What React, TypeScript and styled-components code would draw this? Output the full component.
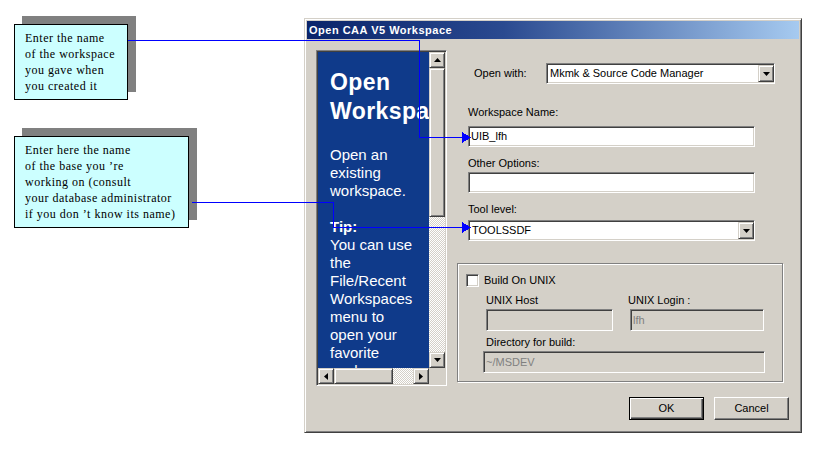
import React from "react";
import styled, { createGlobalStyle } from "styled-components";

const Global = createGlobalStyle`
  html, body { margin: 0; padding: 0; background: #ffffff; }
  body { font-family: "Liberation Sans", Arial, sans-serif; }
`;

const GRAY = "#d4d0c8";

const Page = styled.div`
  position: relative;
  width: 816px;
  height: 451px;
  overflow: hidden;
  display: flex;
  align-items: flex-start;
  padding-left: 14px;
  box-sizing: border-box;
`;

const Notes = styled.div`
  width: 290px;
  flex: none;
  display: flex;
  flex-direction: column;
  align-items: flex-start;
  gap: 36px;
  padding-top: 24px;
`;

const Callout = styled.div<{ $w: number }>`
  width: ${(p) => p.$w}px;
  box-sizing: border-box;
  border: 1px solid #000;
  background: #ccffff;
  box-shadow: 8px -8px 0 #808080;
  padding: 5px 0 5px 10px;
  font: 12px/16px "Liberation Serif", "Times New Roman", serif;
  letter-spacing: 0.5px;
  color: #000;
  white-space: nowrap;
`;

const Window = styled.div`
  margin-top: 18px;
  width: 498px;
  height: 415px;
  flex: none;
  box-sizing: border-box;
  background: ${GRAY};
  border: 1px solid;
  border-color: ${GRAY} #404040 #404040 ${GRAY};
  box-shadow: inset 1px 1px 0 #fff, inset -1px -1px 0 #808080;
  padding: 2px;
  display: flex;
  flex-direction: column;
`;

const TitleBar = styled.div`
  height: 18px;
  line-height: 18px;
  background: linear-gradient(90deg, #0a246a 0%, #2a4a90 40%, #a6caf0 100%);
  color: #fff;
  font: bold 11px/18px "Liberation Sans", Arial, sans-serif;
  letter-spacing: 0.5px;
  padding-left: 2px;
  white-space: nowrap;
`;

const Body = styled.div`
  display: flex;
  flex-direction: column;
  padding: 11px 0 0 9px;
  font: 11px/13px "Liberation Sans", Arial, sans-serif;
  color: #000;
`;

const MainRow = styled.div`
  display: flex;
  gap: 10px;
`;

const Sunken = styled.div`
  box-sizing: border-box;
  border: 1px solid;
  border-color: #808080 #fff #fff #808080;
  box-shadow: inset 1px 1px 0 #404040, inset -1px -1px 0 ${GRAY};
`;

const HelpPane = styled(Sunken)`
  width: 131px;
  height: 336px;
  padding: 1px;
  display: grid;
  grid-template-columns: 111px 16px;
  grid-template-rows: 316px 16px;
`;

const HelpContent = styled.div`
  background: #0f3a8a;
  color: #fff;
  overflow: hidden;
  padding: 16px 0 0 12px;
  white-space: nowrap;
`;

const HelpTitle = styled.div`
  font: bold 23px/29px "Liberation Sans", Arial, sans-serif;
  letter-spacing: 0.4px;
`;

const HelpText = styled.div`
  margin-top: 20px;
  font: 15px/18px "Liberation Sans", Arial, sans-serif;
`;

const Raised = styled.div`
  box-sizing: border-box;
  background: ${GRAY};
  border: 1px solid;
  border-color: ${GRAY} #404040 #404040 ${GRAY};
  box-shadow: inset 1px 1px 0 #fff, inset -1px -1px 0 #808080;
  display: flex;
  align-items: center;
  justify-content: center;
`;

const ScrollV = styled.div`
  display: flex;
  flex-direction: column;
`;

const ScrollH = styled.div`
  display: flex;
`;

const ScrollBtn = styled(Raised)`
  width: 16px;
  height: 16px;
  flex: none;
`;

const Thumb = styled(Raised)<{ $len: number; $horiz?: boolean }>`
  flex: none;
  width: ${(p) => (p.$horiz ? `${p.$len}px` : "16px")};
  height: ${(p) => (p.$horiz ? "16px" : `${p.$len}px`)};
`;

const Track = styled.div`
  flex: 1;
  background-color: #fff;
  background-image: conic-gradient(${GRAY} 25%, #fff 0 50%, ${GRAY} 0 75%, #fff 0);
  background-size: 2px 2px;
`;

const Corner = styled.div`
  background: ${GRAY};
`;

const FormCol = styled.div`
  width: 326px;
  display: flex;
  flex-direction: column;
  align-items: flex-start;
`;

const OpenWithRow = styled.div`
  margin-top: 13px;
  display: flex;
  align-items: center;
  height: 21px;
`;

const OpenWithLabel = styled.span`
  width: 89px;
  box-sizing: border-box;
  padding-left: 17px;
`;

const Label = styled.div<{ $top: number; $left: number }>`
  margin-top: ${(p) => p.$top}px;
  margin-left: ${(p) => p.$left}px;
  height: 13px;
  white-space: nowrap;
`;

const Field = styled(Sunken)<{ $w: number; $h?: number; $top: number; $left: number; $disabled?: boolean }>`
  width: ${(p) => p.$w}px;
  height: ${(p) => p.$h ?? 21}px;
  margin-top: ${(p) => p.$top}px;
  margin-left: ${(p) => p.$left}px;
  background: ${(p) => (p.$disabled ? GRAY : "#fff")};
  color: ${(p) => (p.$disabled ? "#808080" : "#000")};
  display: flex;
  align-items: center;
  padding: 0 0 0 2px;
  white-space: nowrap;
  flex: none;
`;

const ComboText = styled.span`
  flex: 1;
  padding-left: 1px;
`;

const DropBtn = styled(Raised)`
  width: 16px;
  height: 17px;
  flex: none;
`;

const Group = styled.div`
  margin-top: 22px;
  width: 326px;
  box-sizing: border-box;
  border: 1px solid #808080;
  box-shadow: inset 1px 1px 0 #fff, 1px 1px 0 #fff;
  padding-bottom: 8px;
  display: flex;
  flex-direction: column;
  align-items: flex-start;
`;

const CheckRow = styled.div`
  margin-top: 10px;
  margin-left: 8px;
  display: flex;
  align-items: center;
  gap: 5px;
  height: 13px;
`;

const CheckBox = styled(Sunken)`
  width: 13px;
  height: 13px;
  background: #fff;
`;

const UnixRow = styled.div`
  margin-top: 7px;
  margin-left: 28px;
  display: flex;
  gap: 15px;
`;

const UnixCol = styled.div`
  display: flex;
  flex-direction: column;
  align-items: flex-start;
`;

const ButtonRow = styled.div`
  display: flex;
  justify-content: flex-end;
  gap: 10px;
  margin-top: 11px;
  padding-right: 10px;
`;

const PushButton = styled.div<{ $default?: boolean }>`
  width: 75px;
  height: 23px;
  box-sizing: border-box;
  background: ${GRAY};
  display: flex;
  align-items: center;
  justify-content: center;
  border: 1px solid;
  border-color: ${(p) => (p.$default ? "#000" : `#fff #404040 #404040 #fff`)};
  box-shadow: ${(p) =>
    p.$default
      ? "inset 1px 1px 0 #fff, inset -1px -1px 0 #404040, inset -2px -2px 0 #808080"
      : "inset -1px -1px 0 #808080"};
`;

const Overlay = styled.svg`
  position: absolute;
  left: 0;
  top: 0;
  pointer-events: none;
`;

const Arrow = ({ dir }: { dir: "up" | "down" | "left" | "right" }) => {
  const vertical = dir === "up" || dir === "down";
  const w = vertical ? 7 : 4;
  const h = vertical ? 4 : 7;
  const pts =
    dir === "up"
      ? "3.5,0 7,4 0,4"
      : dir === "down"
      ? "0,0 7,0 3.5,4"
      : dir === "left"
      ? "4,0 4,7 0,3.5"
      : "0,0 4,3.5 0,7";
  return (
    <svg width={w} height={h} viewBox={`0 0 ${w} ${h}`}>
      <polygon points={pts} fill="#000" />
    </svg>
  );
};

export default function App() {
  return (
    <>
      <Global />
      <Page>
        <Notes>
          <Callout $w={114}>
            Enter the name
            <br />
            of the workspace
            <br />
            you gave when
            <br />
            you created it
          </Callout>
          <Callout $w={175}>
            Enter here the name
            <br />
            of the base you ’re
            <br />
            working on (consult
            <br />
            your database administrator
            <br />
            if you don ’t know its name)
          </Callout>
        </Notes>

        <Window>
          <TitleBar>Open CAA V5 Workspace</TitleBar>
          <Body>
            <MainRow>
              <HelpPane>
                <HelpContent>
                  <HelpTitle>
                    Open
                    <br />
                    Workspace
                  </HelpTitle>
                  <HelpText>
                    Open an
                    <br />
                    existing
                    <br />
                    workspace.
                    <br />
                    <br />
                    <b>Tip:</b>
                    <br />
                    You can use
                    <br />
                    the
                    <br />
                    File/Recent
                    <br />
                    Workspaces
                    <br />
                    menu to
                    <br />
                    open your
                    <br />
                    favorite
                    <br />
                    workspaces.
                  </HelpText>
                </HelpContent>
                <ScrollV>
                  <ScrollBtn>
                    <Arrow dir="up" />
                  </ScrollBtn>
                  <Thumb $len={149} />
                  <Track />
                  <ScrollBtn>
                    <Arrow dir="down" />
                  </ScrollBtn>
                </ScrollV>
                <ScrollH>
                  <ScrollBtn>
                    <Arrow dir="left" />
                  </ScrollBtn>
                  <Thumb $len={59} $horiz />
                  <Track />
                  <ScrollBtn>
                    <Arrow dir="right" />
                  </ScrollBtn>
                </ScrollH>
                <Corner />
              </HelpPane>

              <FormCol>
                <OpenWithRow>
                  <OpenWithLabel>Open with:</OpenWithLabel>
                  <Field $w={229} $top={0} $left={0}>
                    <ComboText>Mkmk &amp; Source Code Manager</ComboText>
                    <DropBtn>
                      <Arrow dir="down" />
                    </DropBtn>
                  </Field>
                </OpenWithRow>

                <Label $top={22} $left={11}>Workspace Name:</Label>
                <Field $w={287} $top={7} $left={11}>UIB_lfh</Field>

                <Label $top={10} $left={11}>Other Options:</Label>
                <Field $w={287} $top={2} $left={11} />

                <Label $top={10} $left={11}>Tool level:</Label>
                <Field $w={287} $top={4} $left={11}>
                  <ComboText>TOOLSSDF</ComboText>
                  <DropBtn>
                    <Arrow dir="down" />
                  </DropBtn>
                </Field>

                <Group>
                  <CheckRow>
                    <CheckBox />
                    <span>Build On UNIX</span>
                  </CheckRow>
                  <UnixRow>
                    <UnixCol>
                      <Label $top={0} $left={0}>UNIX Host</Label>
                      <Field $w={127} $h={22} $top={2} $left={0} $disabled />
                    </UnixCol>
                    <UnixCol>
                      <Label $top={0} $left={0}>UNIX Login :</Label>
                      <Field $w={134} $h={22} $top={2} $left={2} $disabled>
                        lfh
                      </Field>
                    </UnixCol>
                  </UnixRow>
                  <Label $top={5} $left={28}>Directory for build:</Label>
                  <Field $w={282} $h={22} $top={2} $left={25} $disabled>
                    ~/MSDEV
                  </Field>
                </Group>
              </FormCol>
            </MainRow>

            <ButtonRow>
              <PushButton $default>OK</PushButton>
              <PushButton>Cancel</PushButton>
            </ButtonRow>
          </Body>
        </Window>

        <Overlay width={816} height={451} viewBox="0 0 816 451" shapeRendering="crispEdges">
          <polyline
            points="128,40.5 419.5,40.5 419.5,137.5 463,137.5"
            fill="none"
            stroke="#0000ff"
            strokeWidth={1}
          />
          <polygon points="462,132 471,137.5 462,143" fill="#0000ff" />
          <polyline
            points="192,202.5 333.5,202.5 333.5,227.5 463,227.5"
            fill="none"
            stroke="#0000ff"
            strokeWidth={1}
          />
          <polygon points="462,222 471,227.5 462,233" fill="#0000ff" />
        </Overlay>
      </Page>
    </>
  );
}
